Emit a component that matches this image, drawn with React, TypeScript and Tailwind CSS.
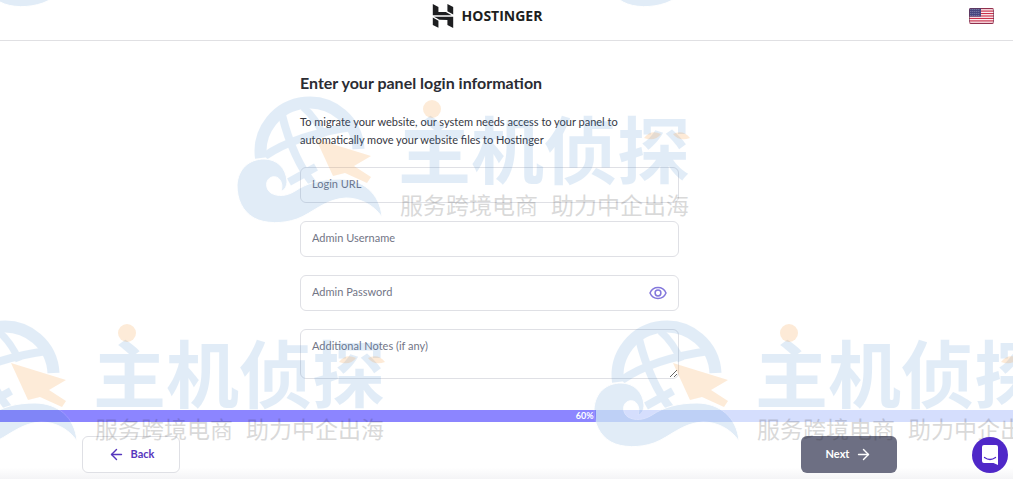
import { useState } from "react";
import { ArrowLeft, ArrowRight } from "lucide-react";
import { SiHostinger } from "react-icons/si";

const emblems = [
  [-17, -121],
  [606, -121],
];

const marks = [
  [237, 95],
  [-68, 319],
  [594, 319],
];

function Emblem() {
  return (
    <>
      <g opacity="0.15" fill="#3f88d0">
        <g fill="none" stroke="#3f88d0">
          <path d="M24 63A49 49 0 1 1 121.500 54" strokeWidth="12" />
          <path d="M45 20Q56 64 77 90" strokeWidth="8" />
          <path d="M66 12Q80 24 87 42" strokeWidth="7" />
          <path d="M28 61Q58 40 115 32" strokeWidth="8" />
          <path d="M52 87L79 72" strokeWidth="8" />
        </g>
        <path
          d="M0 90C1 74 12 64 27 64C40 64 49 73 50 86C50 91 48 95 44 96C47 88 42 80 35 82C28 84 28 94 34 98C41 102 50 101 58 96C70 88 84 84 103 84C125 84 143 98 145 122C136 109 122 103 109 103C88 104 76 118 60 124C46 129 28 129 17 123C5 116 0 104 0 90Z"
          stroke="#fff"
          strokeWidth="1"
        />
      </g>
      <path
        d="M79 44L134 61L117 71L134 82L130 88L108 78L96 81Z"
        opacity="0.2"
        fill="#f79a3c"
      />
    </>
  );
}

function Mark() {
  return (
    <>
      <Emblem />
      <text
        x="161"
        y="83"
        opacity="0.15"
        fill="#3f88d0"
        className="font-['Noto_Sans_CJK_SC',sans-serif] text-[73px] font-bold"
      >
        主机侦探
      </text>
      <g opacity="0.2" fill="#f79a3c">
        <circle cx="195" cy="14" r="9" />
        <path d="M407 43Q414 34 424 39Q418 47 407 43Z" />
        <path d="M453 43Q446 34 436 39Q442 47 453 43Z" />
      </g>
      <g
        opacity="0.17"
        fill="#222"
        className="font-['Noto_Sans_CJK_SC',sans-serif] text-[23px]"
      >
        <text x="163" y="119">服务跨境电商</text>
        <text x="314" y="119">助力中企出海</text>
      </g>
    </>
  );
}

function Watermark() {
  return (
    <svg
      aria-hidden="true"
      className="pointer-events-none absolute inset-0 z-10 h-full w-full overflow-hidden"
    >
      {emblems.map(([x, y]) => (
        <g key={`${x},${y}`} transform={`translate(${x} ${y})`}>
          <Emblem />
        </g>
      ))}
      {marks.map(([x, y]) => (
        <g key={`${x},${y}`} transform={`translate(${x} ${y})`}>
          <Mark />
        </g>
      ))}
    </svg>
  );
}

function Flag() {
  return (
    <svg viewBox="0 0 25 16" className="block h-4 w-[25px]">
      <defs>
        <clipPath id="flag">
          <rect width="25" height="16" rx="2" />
        </clipPath>
      </defs>
      <g clipPath="url(#flag)">
        <rect width="25" height="16" fill="#fff" />
        {[0, 1, 2, 3, 4, 5, 6].map((i) => (
          <rect key={i} y={i * 2.46} width="25" height="1.23" fill="#c9304a" />
        ))}
        <rect width="12" height="8.6" fill="#46467f" />
        {[1.5, 3.5, 5.5, 7.5].map((y) => (
          <path key={y} d={`M1.5 ${y}H11`} stroke="#c5c5de" strokeWidth="0.7" strokeDasharray="0.7 1.3" />
        ))}
        <rect x="0.5" y="0.5" width="24" height="15" rx="1.5" fill="none" stroke="#6b3050" strokeOpacity="0.6" />
      </g>
    </svg>
  );
}

function Eye() {
  return (
    <svg viewBox="0 0 18 14" className="block h-[14px] w-[18px]" fill="none" stroke="#8377dc" strokeWidth="1.5">
      <path d="M1 7C2.5 3.5 5.4 1.5 9 1.5S15.5 3.5 17 7C15.5 10.5 12.6 12.5 9 12.5S2.5 10.5 1 7Z" />
      <circle cx="9" cy="7" r="2.9" />
    </svg>
  );
}

const field =
  "block w-full rounded-md border border-[#dfe0e5] bg-white px-[11px] text-[11px] text-[#36344d] placeholder:text-[#727586] outline-none focus:border-[#8c85ff]";

export default function App() {
  const [visible, setVisible] = useState(false);
  const progress = 58.8;

  return (
    <div className="relative min-h-screen overflow-hidden bg-white font-['Lato',sans-serif] text-[#2f1c6a]">
      <header className="grid h-[41px] grid-cols-[1fr_auto_1fr] items-center border-b border-[#e0e0e3] pr-10 pb-2">
        <a href="#" className="col-start-2 flex items-center gap-[7px] text-[#1d1e20]">
          <SiHostinger className="size-6" aria-hidden="true" />
          <span className="font-['Open_Sans',sans-serif] text-[14px] font-bold leading-5">HOSTINGER</span>
        </a>
        <button type="button" aria-label="Language" className="-mr-[21px] justify-self-end">
          <Flag />
        </button>
      </header>

      <main className="pr-[34px]">
        <form className="mx-auto max-w-[379px] pt-[31px]">
          <h1 className="text-[16px] font-bold leading-[22px] text-[#2b2c33]">
            Enter your panel login information
          </h1>
          <p className="mt-[19px] text-[11px] leading-[18px] text-[#36373f]">
            To migrate your website, our system needs access to your panel to
            <br />
            automatically move your website files to Hostinger
          </p>
          <div className="mt-[18px] grid gap-[18px]">
            <input type="url" aria-label="Login URL" placeholder="Login URL" className={`${field} h-9 pb-[3px]`} />
            <input type="text" aria-label="Admin Username" placeholder="Admin Username" className={`${field} h-9 pb-[3px]`} />
            <div className="relative">
              <input
                type={visible ? "text" : "password"}
                aria-label="Admin Password"
                placeholder="Admin Password"
                className={`${field} h-9 pr-10 pb-[3px]`}
              />
              <button
                type="button"
                aria-label="Show password"
                onClick={() => setVisible(!visible)}
                className="absolute inset-y-0 right-3 flex items-center"
              >
                <Eye />
              </button>
            </div>
            <textarea
              aria-label="Additional Notes (if any)"
              placeholder="Additional Notes (if any)"
              className={`${field} h-[50px] resize-y py-[7px] leading-[18px]`}
            />
          </div>
        </form>
      </main>

      <div className="mt-[31px] h-3 bg-[#d5defd]">
        <div
          className="h-full bg-[#8c85ff] pr-[2px] text-right text-[9px] font-bold leading-3 text-white"
          style={{ width: `${progress}%` }}
        >
          60%
        </div>
      </div>

      <footer className="bg-linear-to-b from-white from-80% to-[#f4f4f6] pt-[14px] pr-[34px] pb-[6px]">
        <div className="mx-auto flex max-w-[815px] justify-between">
          <button
            type="button"
            className="flex h-[37px] w-[98px] items-center justify-center gap-[6px] rounded-md border border-[#dfe0e5] bg-white text-[11px] font-bold text-[#5636bd]"
          >
            <ArrowLeft size={17} />
            Back
          </button>
          <button
            type="button"
            className="flex h-[37px] w-24 items-center justify-center gap-[6px] rounded-md bg-[#6d6f83] text-[11px] font-bold text-white"
          >
            Next
            <ArrowRight size={17} />
          </button>
        </div>
      </footer>

      <Watermark />
      <button
        type="button"
        aria-label="Open chat"
        className="absolute right-[5px] bottom-[6px] z-20 flex size-9 items-center justify-center rounded-full bg-[#4f28c8]"
      >
        <svg viewBox="0 0 18 20" className="h-5 w-[18px]">
          <path d="M3 0H15Q17 0 17 2V20L12.5 18H3Q1 18 1 16V2Q1 0 3 0Z" fill="#fff" />
          <path d="M3.5 12.5Q9 16.5 14.5 12.5" fill="none" stroke="#4f28c8" strokeWidth="1.3" strokeLinecap="round" />
        </svg>
      </button>
    </div>
  );
}
